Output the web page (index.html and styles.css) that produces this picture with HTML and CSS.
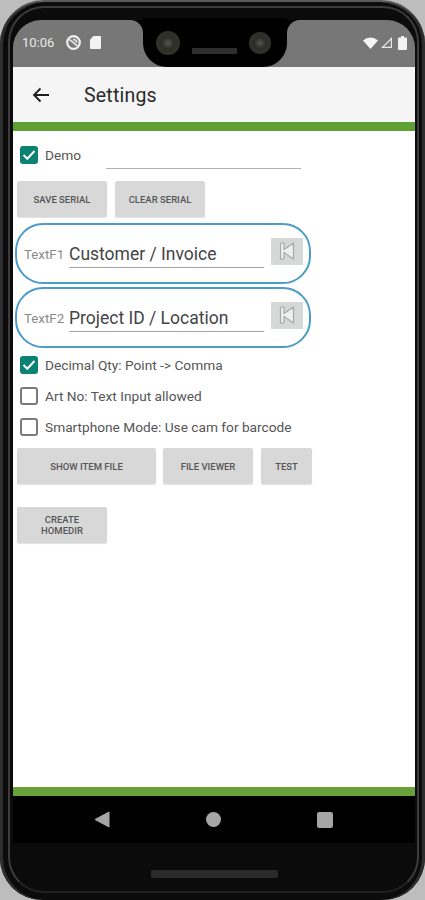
FILE: index.html
```html
<!DOCTYPE html>
<html lang="en">
<head>
  <meta charset="UTF-8">
  <meta name="viewport" content="width=device-width, initial-scale=1.0">
  <title>Settings</title>
  <link rel="stylesheet" href="styles.css">
</head>
<body>
  <div class="phone">
    <div class="screen">
      <div class="statusbar">
        <div class="status-left">
          <span class="clock">10:06</span>
          <svg width="15" height="15" viewBox="0 0 15 15"><circle cx="7.500" cy="7.500" r="6.300" fill="none" stroke="#eee" stroke-width="2.200"/><path d="M3.500 4.500l8 6.500M7 4.500a3.500 3.500 0 0 1 3.800 3.200" fill="none" stroke="#ddd" stroke-width="1.800"/></svg>
          <svg width="11" height="13" viewBox="0 0 11 13"><path d="M3.500 0H10a1 1 0 0 1 1 1v11a1 1 0 0 1-1 1H1a1 1 0 0 1-1-1V3.500z" fill="#f2f2f2"/></svg>
        </div>
        <div class="status-right">
          <svg width="15" height="12" viewBox="0 0 15 12"><path d="M0 3.500a11 11 0 0 1 15 0L7.500 12z" fill="#f5f5f5"/></svg>
          <svg class="signal" width="11" height="11" viewBox="0 0 11 11"><path d="M11 0v11H0zM9.800 3L3 9.800h6.800z" fill="#e6e6e6" fill-rule="evenodd"/></svg>
          <svg width="9" height="14" viewBox="0 0 9 14"><path d="M3 0h3v1.500h2a1 1 0 0 1 1 1V13a1 1 0 0 1-1 1H1a1 1 0 0 1-1-1V2.500a1 1 0 0 1 1-1h2z" fill="#f2f2f2"/></svg>
        </div>
      </div>

      <div class="appbar">
        <svg class="back" width="18" height="16" viewBox="0 0 18 16"><path d="M17 8H2M8.500 1.500L2 8l6.500 6.500" fill="none" stroke="#1d1d1d" stroke-width="1.800"/></svg>
        <span class="title">Settings</span>
      </div>
      <div class="greenbar"></div>

      <div class="content">
        <div class="check-row demo-row">
          <span class="check on"><svg width="14" height="12" viewBox="0 0 14 12"><path d="M1.500 6l3.800 3.800L12.500 2" fill="none" stroke="#fff" stroke-width="2"/></svg></span>
          <span class="check-label">Demo</span>
          <span class="serial-line"></span>
        </div>

        <div class="btn-row first-btns">
          <button class="btn w90">SAVE SERIAL</button>
          <button class="btn w90">CLEAR SERIAL</button>
        </div>

        <div class="textf">
          <span class="textf-label">TextF1</span>
          <span class="textf-value">Customer / Invoice</span>
          <span class="skip"><svg width="16" height="20" viewBox="0 0 16 20"><path d="M1.500 2h3.500v6.500L14.500 2v16L5 11.500V18H1.500z" fill="#efefef" stroke="#a9a9a9" stroke-width="1.200" stroke-linejoin="round"/></svg></span>
        </div>
        <div class="textf second">
          <span class="textf-label">TextF2</span>
          <span class="textf-value">Project ID / Location</span>
          <span class="skip"><svg width="16" height="20" viewBox="0 0 16 20"><path d="M1.500 2h3.500v6.500L14.500 2v16L5 11.500V18H1.500z" fill="#efefef" stroke="#a9a9a9" stroke-width="1.200" stroke-linejoin="round"/></svg></span>
        </div>

        <div class="checks">
          <div class="check-row">
            <span class="check on"><svg width="14" height="12" viewBox="0 0 14 12"><path d="M1.500 6l3.800 3.800L12.500 2" fill="none" stroke="#fff" stroke-width="2"/></svg></span>
            <span class="check-label">Decimal Qty: Point -&gt; Comma</span>
          </div>
          <div class="check-row">
            <span class="check"></span>
            <span class="check-label">Art No: Text Input allowed</span>
          </div>
          <div class="check-row">
            <span class="check"></span>
            <span class="check-label">Smartphone Mode: Use cam for barcode</span>
          </div>
        </div>

        <div class="btn-row second-btns">
          <button class="btn w140">SHOW ITEM FILE</button>
          <button class="btn w90">FILE VIEWER</button>
          <button class="btn w51">TEST</button>
        </div>

        <div class="btn-row third-btns">
          <button class="btn w90 tall">CREATE HOMEDIR</button>
        </div>
      </div>

      <div class="greenbar bottom"></div>
      <div class="navbar">
        <svg width="16" height="17" viewBox="0 0 16 17"><path d="M15 1v15L1 8.500z" fill="#a6a6a6" stroke="#a6a6a6" stroke-linejoin="round"/></svg>
        <span class="nav-home"></span>
        <span class="nav-square"></span>
      </div>
    </div>
    <div class="speaker-bottom"></div>

    <!-- notch and highlight ring sit over the screen -->
    <div class="notch">
      <span class="lens"></span>
      <span class="speaker"></span>
      <span class="lens small"></span>
    </div>
    <div class="ring"></div>
  </div>
</body>
</html>
```
FILE: styles.css
```css
* {
  box-sizing: border-box;
}
html, body {
  margin: 0;
  height: 900px;
  overflow: hidden;
}
body {
  background-color: #bdbdbd;
  font-family: Roboto, "Liberation Sans", sans-serif;
}
.phone {
  position: relative;
  width: 425px;
  height: 900px;
  padding: 20px 10px 0 13px;
  background-color: #0b0b0b;
  border-radius: 44px 44px 42px 42px;
  border-top: 2px solid #5a5a5a;
  box-shadow: inset 3px 0 0 #2e2e2e, inset -3px 0 0 #2e2e2e;
}
.ring {
  position: absolute;
  top: 4px;
  left: 8px;
  right: 6px;
  bottom: 7px;
  border: 2px solid #3c3c3c;
  border-bottom-color: #222;
  border-radius: 36px;
  pointer-events: none;
}
.screen {
  width: 402px;
  margin-top: -2px;
  display: flex;
  flex-direction: column;
  height: 823px;
  border-radius: 28px 28px 0 0;
  overflow: hidden;
}
.statusbar {
  height: 47px;
  background-color: #777;
  display: flex;
  justify-content: space-between;
  align-items: center;
  padding: 0 8px 2px 9px;
  flex-shrink: 0;
}
.status-left, .status-right {
  display: flex;
  align-items: center;
}
.status-left {
  gap: 9px;
}
.status-right {
  gap: 3px;
}
.signal {
  margin-right: 3px;
}
.clock {
  color: #e8e8e8;
  font-size: 13px;
  width: 35px;
}
.appbar {
  height: 55px;
  background-color: #f5f5f5;
  display: flex;
  align-items: center;
  padding-left: 19px;
  flex-shrink: 0;
}
.back {
  margin-right: 34px;
}
.title {
  margin-top: 2px;
  font-size: 19.5px;
  letter-spacing: 0.2px;
  color: #2a2a2a;
}
.greenbar {
  height: 9px;
  background-color: #5fa033;
  flex-shrink: 0;
}
.greenbar.bottom {
  background-color: #68a03a;
}
.content {
  flex: 1;
  background-color: #fff;
  padding: 0 0 0 4px;
}
.check-row {
  display: flex;
  align-items: center;
  height: 31px;
  padding-left: 3px;
}
.demo-row {
  height: 30px;
  margin-top: 9px;
}
.check {
  width: 18px;
  height: 18px;
  border: 2px solid #7a7a7a;
  border-radius: 3px;
  margin-right: 7px;
  display: flex;
  align-items: center;
  justify-content: center;
  flex-shrink: 0;
}
.check.on {
  background-color: #0c8272;
  border-color: #0c8272;
}
.check-label {
  font-size: 13.7px;
  color: #555;
  white-space: nowrap;
}
.serial-line {
  width: 195px;
  height: 1px;
  background-color: #b0b0b0;
  margin: 26px 0 0 25px;
}
.btn-row {
  display: flex;
  gap: 7px;
}
.first-btns {
  gap: 8px;
  margin-top: 11px;
}
.second-btns {
  margin-top: 6px;
}
.third-btns {
  margin-top: 23px;
}
.btn {
  height: 36px;
  border: none;
  border-radius: 2px;
  padding: 0 4px;
  background-color: #d8d8d8;
  color: #555;
  font-family: Roboto, "Liberation Sans", sans-serif;
  font-size: 9.5px;
  font-weight: 500;
  box-shadow: 0 1px 1px rgba(0, 0, 0, 0.12);
}
.w90 { width: 90px; }
.w140 { width: 139px; }
.w51 { width: 51px; margin-left: 1px; }
.tall { line-height: 11px; padding: 0 20px; }
.textf {
  width: 296px;
  height: 61px;
  margin: 6px 0 0 -2px;
  padding-left: 7px;
  border: 2px solid #4b9cc9;
  border-radius: 28px;
  display: flex;
  align-items: center;
}
.textf.second {
  margin-top: 3px;
}
.textf-label {
  font-size: 13.3px;
  color: #8a8a8a;
  width: 45px;
  flex-shrink: 0;
  margin-top: 2px;
}
.textf-value {
  width: 195px;
  font-size: 17.5px;
  color: #444;
  border-bottom: 1px solid #a5a5a5;
  padding-bottom: 3px;
  margin-top: 4px;
  white-space: nowrap;
}
.skip {
  width: 32px;
  height: 27px;
  margin: -5px 0 0 7px;
  background-color: #d6d7d7;
  display: flex;
  align-items: center;
  justify-content: center;
}
.checks {
  margin-top: 1px;
}
.navbar {
  height: 47px;
  background-color: #000;
  display: flex;
  align-items: center;
  justify-content: space-between;
  padding: 0 82px 0 81px;
  flex-shrink: 0;
}
.nav-home {
  width: 15px;
  height: 15px;
  border-radius: 50%;
  background-color: #a6a6a6;
}
.nav-square {
  width: 16px;
  height: 16px;
  border-radius: 2px;
  background-color: #a6a6a6;
}
.speaker-bottom {
  width: 127px;
  height: 8px;
  margin: 27px 0 0 138px;
  border-radius: 2px;
  background-color: #2a2a2a;
}
.notch {
  position: absolute;
  top: 16px;
  left: 143px;
  width: 144px;
  height: 49px;
  padding: 1px 0 0 13px;
  background-color: #000;
  border-radius: 0 0 24px 24px;
  display: flex;
  align-items: center;
  gap: 12px;
}
.notch::before, .notch::after {
  content: "";
  position: absolute;
  top: 2px;
  width: 13px;
  height: 13px;
}
.notch::before {
  left: -13px;
  background: radial-gradient(circle at 0 100%, transparent 12.5px, #000 13.5px);
}
.notch::after {
  right: -13px;
  background: radial-gradient(circle at 100% 100%, transparent 12.5px, #000 13.5px);
}
.lens {
  width: 24px;
  height: 24px;
  flex-shrink: 0;
  border-radius: 50%;
  background: radial-gradient(circle, #55554c 0, #2e2e29 35%, #33332e 75%, #151513 100%);
}
.lens.small {
  width: 22px;
  height: 22px;
}
.speaker {
  width: 45px;
  height: 6px;
  margin-top: 16px;
  border-radius: 1px;
  background-color: #2e2e2e;
}
```
